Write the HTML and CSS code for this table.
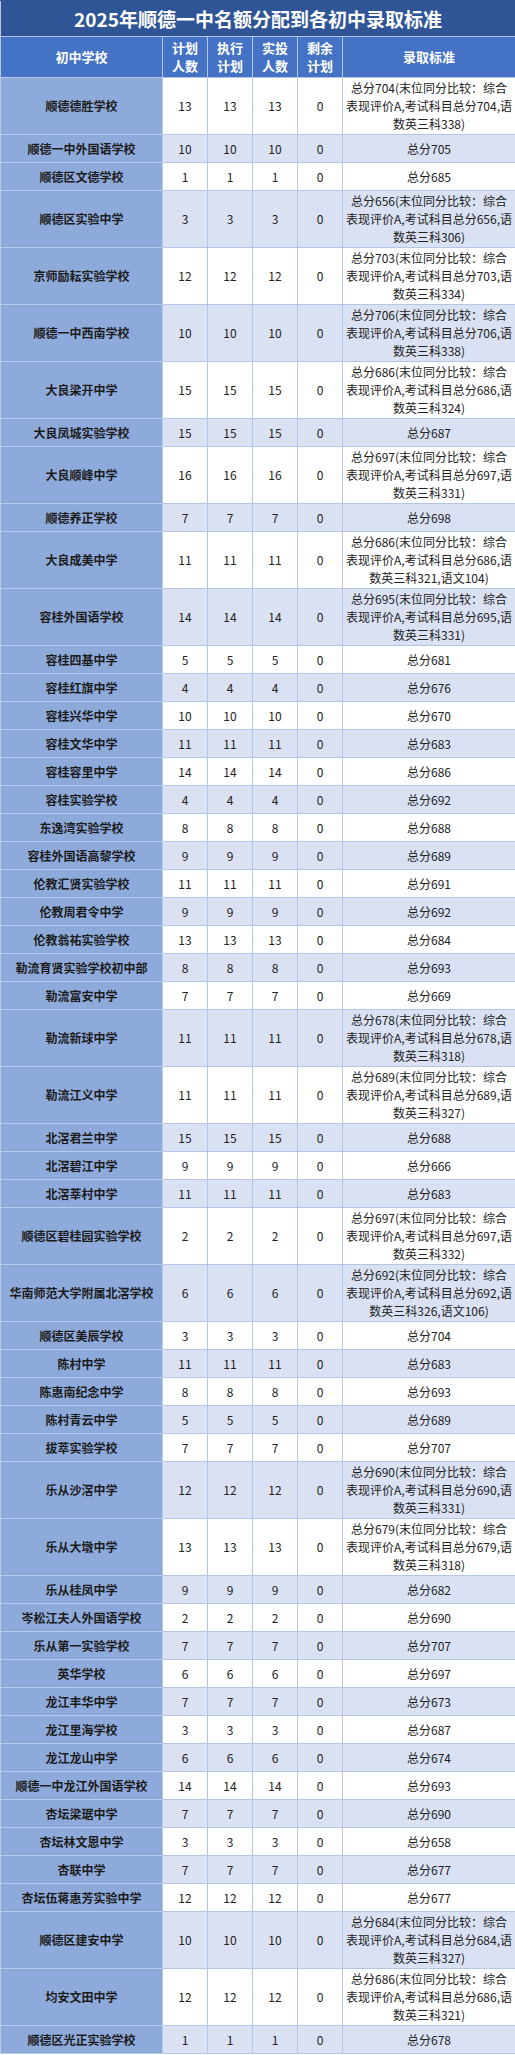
FILE: index.html
```html
<!DOCTYPE html>
<html lang="zh-CN">
<head>
<meta charset="utf-8">
<title>2025年顺德一中名额分配到各初中录取标准</title>
<link rel="stylesheet" href="styles.css">
</head>
<body>
<table class="sheet">
<colgroup>
<col class="c-name"><col class="c-num"><col class="c-num"><col class="c-num"><col class="c-num"><col class="c-std">
</colgroup>
<thead>
<tr class="title"><th colspan="6">2025年顺德一中名额分配到各初中录取标准</th></tr>
<tr class="head"><th>初中学校</th><th>计划<br>人数</th><th>执行<br>计划</th><th>实投<br>人数</th><th>剩余<br>计划</th><th>录取标准</th></tr>
</thead>
<tbody>
<tr class="t"><td class="name">顺德德胜学校</td><td>13</td><td>13</td><td>13</td><td>0</td><td>总分704(末位同分比较：综合<br>表现评价A,考试科目总分704,语<br>数英三科338)</td></tr>
<tr class="s"><td class="name">顺德一中外国语学校</td><td>10</td><td>10</td><td>10</td><td>0</td><td>总分705</td></tr>
<tr class="s"><td class="name">顺德区文德学校</td><td>1</td><td>1</td><td>1</td><td>0</td><td>总分685</td></tr>
<tr class="t"><td class="name">顺德区实验中学</td><td>3</td><td>3</td><td>3</td><td>0</td><td>总分656(末位同分比较：综合<br>表现评价A,考试科目总分656,语<br>数英三科306)</td></tr>
<tr class="t"><td class="name">京师励耘实验学校</td><td>12</td><td>12</td><td>12</td><td>0</td><td>总分703(末位同分比较：综合<br>表现评价A,考试科目总分703,语<br>数英三科334)</td></tr>
<tr class="t"><td class="name">顺德一中西南学校</td><td>10</td><td>10</td><td>10</td><td>0</td><td>总分706(末位同分比较：综合<br>表现评价A,考试科目总分706,语<br>数英三科338)</td></tr>
<tr class="t"><td class="name">大良梁开中学</td><td>15</td><td>15</td><td>15</td><td>0</td><td>总分686(末位同分比较：综合<br>表现评价A,考试科目总分686,语<br>数英三科324)</td></tr>
<tr class="s"><td class="name">大良凤城实验学校</td><td>15</td><td>15</td><td>15</td><td>0</td><td>总分687</td></tr>
<tr class="t"><td class="name">大良顺峰中学</td><td>16</td><td>16</td><td>16</td><td>0</td><td>总分697(末位同分比较：综合<br>表现评价A,考试科目总分697,语<br>数英三科331)</td></tr>
<tr class="s"><td class="name">顺德养正学校</td><td>7</td><td>7</td><td>7</td><td>0</td><td>总分698</td></tr>
<tr class="t"><td class="name">大良成美中学</td><td>11</td><td>11</td><td>11</td><td>0</td><td>总分686(末位同分比较：综合<br>表现评价A,考试科目总分686,语<br>数英三科321,语文104)</td></tr>
<tr class="t"><td class="name">容桂外国语学校</td><td>14</td><td>14</td><td>14</td><td>0</td><td>总分695(末位同分比较：综合<br>表现评价A,考试科目总分695,语<br>数英三科331)</td></tr>
<tr class="s"><td class="name">容桂四基中学</td><td>5</td><td>5</td><td>5</td><td>0</td><td>总分681</td></tr>
<tr class="s"><td class="name">容桂红旗中学</td><td>4</td><td>4</td><td>4</td><td>0</td><td>总分676</td></tr>
<tr class="s"><td class="name">容桂兴华中学</td><td>10</td><td>10</td><td>10</td><td>0</td><td>总分670</td></tr>
<tr class="s"><td class="name">容桂文华中学</td><td>11</td><td>11</td><td>11</td><td>0</td><td>总分683</td></tr>
<tr class="s"><td class="name">容桂容里中学</td><td>14</td><td>14</td><td>14</td><td>0</td><td>总分686</td></tr>
<tr class="s"><td class="name">容桂实验学校</td><td>4</td><td>4</td><td>4</td><td>0</td><td>总分692</td></tr>
<tr class="s"><td class="name">东逸湾实验学校</td><td>8</td><td>8</td><td>8</td><td>0</td><td>总分688</td></tr>
<tr class="s"><td class="name">容桂外国语高黎学校</td><td>9</td><td>9</td><td>9</td><td>0</td><td>总分689</td></tr>
<tr class="s"><td class="name">伦教汇贤实验学校</td><td>11</td><td>11</td><td>11</td><td>0</td><td>总分691</td></tr>
<tr class="s"><td class="name">伦教周君令中学</td><td>9</td><td>9</td><td>9</td><td>0</td><td>总分692</td></tr>
<tr class="s"><td class="name">伦教翁祐实验学校</td><td>13</td><td>13</td><td>13</td><td>0</td><td>总分684</td></tr>
<tr class="s"><td class="name">勒流育贤实验学校初中部</td><td>8</td><td>8</td><td>8</td><td>0</td><td>总分693</td></tr>
<tr class="s"><td class="name">勒流富安中学</td><td>7</td><td>7</td><td>7</td><td>0</td><td>总分669</td></tr>
<tr class="t"><td class="name">勒流新球中学</td><td>11</td><td>11</td><td>11</td><td>0</td><td>总分678(末位同分比较：综合<br>表现评价A,考试科目总分678,语<br>数英三科318)</td></tr>
<tr class="t"><td class="name">勒流江义中学</td><td>11</td><td>11</td><td>11</td><td>0</td><td>总分689(末位同分比较：综合<br>表现评价A,考试科目总分689,语<br>数英三科327)</td></tr>
<tr class="s"><td class="name">北滘君兰中学</td><td>15</td><td>15</td><td>15</td><td>0</td><td>总分688</td></tr>
<tr class="s"><td class="name">北滘碧江中学</td><td>9</td><td>9</td><td>9</td><td>0</td><td>总分666</td></tr>
<tr class="s"><td class="name">北滘莘村中学</td><td>11</td><td>11</td><td>11</td><td>0</td><td>总分683</td></tr>
<tr class="t"><td class="name">顺德区碧桂园实验学校</td><td>2</td><td>2</td><td>2</td><td>0</td><td>总分697(末位同分比较：综合<br>表现评价A,考试科目总分697,语<br>数英三科332)</td></tr>
<tr class="t"><td class="name">华南师范大学附属北滘学校</td><td>6</td><td>6</td><td>6</td><td>0</td><td>总分692(末位同分比较：综合<br>表现评价A,考试科目总分692,语<br>数英三科326,语文106)</td></tr>
<tr class="s"><td class="name">顺德区美辰学校</td><td>3</td><td>3</td><td>3</td><td>0</td><td>总分704</td></tr>
<tr class="s"><td class="name">陈村中学</td><td>11</td><td>11</td><td>11</td><td>0</td><td>总分683</td></tr>
<tr class="s"><td class="name">陈惠南纪念中学</td><td>8</td><td>8</td><td>8</td><td>0</td><td>总分693</td></tr>
<tr class="s"><td class="name">陈村青云中学</td><td>5</td><td>5</td><td>5</td><td>0</td><td>总分689</td></tr>
<tr class="s"><td class="name">拔萃实验学校</td><td>7</td><td>7</td><td>7</td><td>0</td><td>总分707</td></tr>
<tr class="t"><td class="name">乐从沙滘中学</td><td>12</td><td>12</td><td>12</td><td>0</td><td>总分690(末位同分比较：综合<br>表现评价A,考试科目总分690,语<br>数英三科331)</td></tr>
<tr class="t"><td class="name">乐从大墩中学</td><td>13</td><td>13</td><td>13</td><td>0</td><td>总分679(末位同分比较：综合<br>表现评价A,考试科目总分679,语<br>数英三科318)</td></tr>
<tr class="s"><td class="name">乐从桂凤中学</td><td>9</td><td>9</td><td>9</td><td>0</td><td>总分682</td></tr>
<tr class="s"><td class="name">岑松江夫人外国语学校</td><td>2</td><td>2</td><td>2</td><td>0</td><td>总分690</td></tr>
<tr class="s"><td class="name">乐从第一实验学校</td><td>7</td><td>7</td><td>7</td><td>0</td><td>总分707</td></tr>
<tr class="s"><td class="name">英华学校</td><td>6</td><td>6</td><td>6</td><td>0</td><td>总分697</td></tr>
<tr class="s"><td class="name">龙江丰华中学</td><td>7</td><td>7</td><td>7</td><td>0</td><td>总分673</td></tr>
<tr class="s"><td class="name">龙江里海学校</td><td>3</td><td>3</td><td>3</td><td>0</td><td>总分687</td></tr>
<tr class="s"><td class="name">龙江龙山中学</td><td>6</td><td>6</td><td>6</td><td>0</td><td>总分674</td></tr>
<tr class="s"><td class="name">顺德一中龙江外国语学校</td><td>14</td><td>14</td><td>14</td><td>0</td><td>总分693</td></tr>
<tr class="s"><td class="name">杏坛梁琚中学</td><td>7</td><td>7</td><td>7</td><td>0</td><td>总分690</td></tr>
<tr class="s"><td class="name">杏坛林文恩中学</td><td>3</td><td>3</td><td>3</td><td>0</td><td>总分658</td></tr>
<tr class="s"><td class="name">杏联中学</td><td>7</td><td>7</td><td>7</td><td>0</td><td>总分677</td></tr>
<tr class="s"><td class="name">杏坛伍蒋惠芳实验中学</td><td>12</td><td>12</td><td>12</td><td>0</td><td>总分677</td></tr>
<tr class="t"><td class="name">顺德区建安中学</td><td>10</td><td>10</td><td>10</td><td>0</td><td>总分684(末位同分比较：综合<br>表现评价A,考试科目总分684,语<br>数英三科327)</td></tr>
<tr class="t"><td class="name">均安文田中学</td><td>12</td><td>12</td><td>12</td><td>0</td><td>总分686(末位同分比较：综合<br>表现评价A,考试科目总分686,语<br>数英三科321)</td></tr>
<tr class="s"><td class="name">顺德区光正实验学校</td><td>1</td><td>1</td><td>1</td><td>0</td><td>总分678</td></tr>
</tbody>
</table>
</body>
</html>
```
FILE: styles.css
```css
html, body {
  margin: 0;
  padding: 0;
  background: #ffffff;
}
body {
  font-family: "Noto Sans CJK SC", "Noto Sans", sans-serif;
  color: #222222;
}
.sheet {
  width: 515px;
  border-collapse: collapse;
  table-layout: fixed;
  font-size: 12px;
}
.c-name { width: 162px; }
.c-num { width: 45px; }
.c-std { width: 173px; }
.sheet th, .sheet td {
  border: 1px solid #b4c6e7;
  padding: 0;
  text-align: center;
  vertical-align: middle;
  white-space: nowrap;
  overflow: hidden;
}
.title th {
  height: 35px;
  background: #2f5597;
  color: #ffffff;
  font-size: 19px;
  font-weight: 700;
  line-height: 22px;
  border-color: #2f5597 #b4c6e7 #b4c6e7 #b4c6e7;
}
.head th {
  height: 40px;
  background: #4472c4;
  color: #ffffff;
  font-weight: 700;
  line-height: 18px;
  font-size: 13px;
}
.sheet tbody td {
  line-height: 18px;
}
tr.s td { height: 27px; }
tr.t td { height: 56px; }
tbody tr:nth-child(odd) td { background: #ffffff; }
tbody tr:nth-child(even) td { background: #d9e1f2; }
tbody tr td.name {
  background: #8eaadb;
  font-weight: 700;
  color: #1c1c1c;
  border-color: #b9cbeb;
}
```
